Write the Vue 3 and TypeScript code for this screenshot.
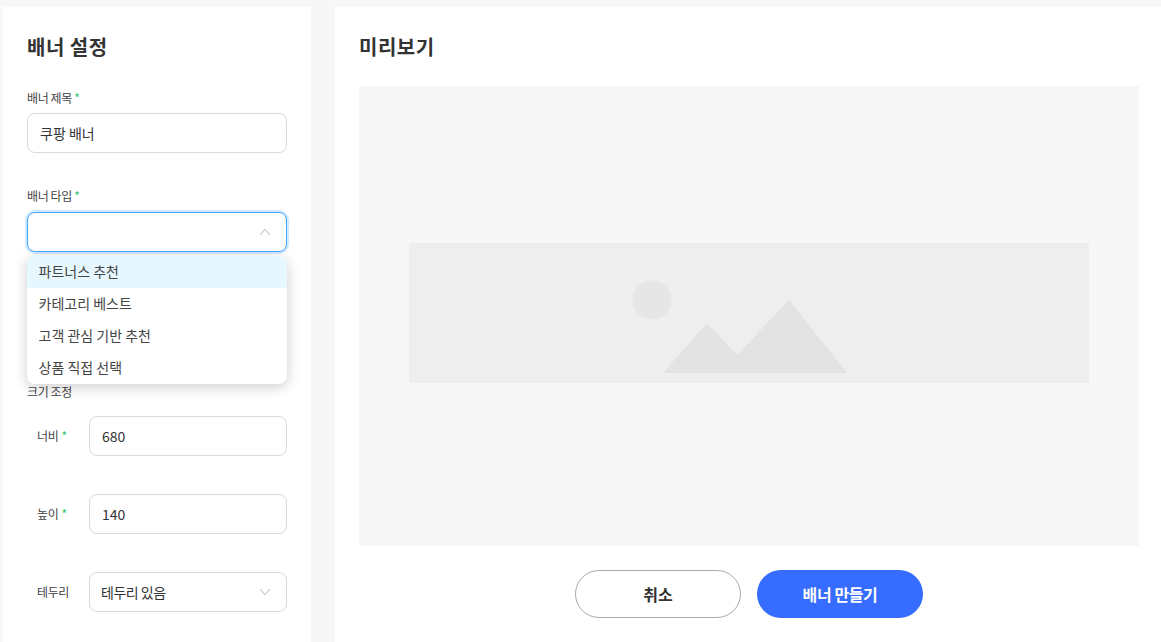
<script setup lang="ts">
import { ref } from "vue";

const title = ref('쿠팡 배너')
const width = ref('680')
const height = ref('140')
const bannerTypes = ['파트너스 추천', '카테고리 베스트', '고객 관심 기반 추천', '상품 직접 선택']
</script>

<template>
  <div class="page">
    <section class="card settings">
      <h2>배너 설정</h2>

      <div class="field">
        <label>배너 제목 <i>*</i></label>
        <input v-model="title" class="input" />
      </div>

      <div class="field type-field">
        <label>배너 타입 <i>*</i></label>
        <div class="select open">
          <svg class="arrow" width="12" height="8" viewBox="0 0 12 8"><path d="M1 7 L6 1.5 L11 7" /></svg>
        </div>
        <ul class="menu">
          <li v-for="(item, i) in bannerTypes" :key="item" :class="{ active: i === 0 }">{{ item }}</li>
        </ul>
      </div>

      <div class="size-title">크기 조정</div>
      <div class="size-row">
        <label>너비 <i>*</i></label>
        <input v-model="width" class="input" />
      </div>
      <div class="size-row">
        <label>높이 <i>*</i></label>
        <input v-model="height" class="input" />
      </div>
      <div class="size-row">
        <label>테두리</label>
        <div class="select">
          <span class="value">테두리 있음</span>
          <svg class="arrow" width="12" height="8" viewBox="0 0 12 8"><path d="M1 1 L6 6.5 L11 1" /></svg>
        </div>
      </div>
    </section>

    <section class="card preview">
      <h2>미리보기</h2>
      <div class="stage">
        <div class="placeholder">
          <svg width="680" height="140" viewBox="0 0 680 140">
            <circle cx="243" cy="57" r="19.5" fill="#e6e6e6" />
            <path d="M254 130 L298 80 L328 112 L380 57 L438 130 Z" fill="#e3e3e3" />
          </svg>
        </div>
      </div>
      <div class="actions">
        <button class="btn cancel">취소</button>
        <button class="btn primary">배너 만들기</button>
      </div>
    </section>
  </div>
</template>

<style>
html, body {
  margin: 0;
  background: #f7f7f7;
  overflow: hidden;
}
</style>

<style scoped>
.page {
  display: flex;
  align-items: stretch;
  gap: 24px;
  height: 635px;
  padding: 7px 0 0 3px;
  overflow: hidden;
  color: #333;
  font-family: "Noto Sans CJK KR", "Noto Sans", sans-serif;
}

.card {
  background: #fff;
  box-sizing: border-box;
  height: 700px;
}

.settings {
  width: 308px;
  flex: none;
  padding: 26px 24px 0;
}

.preview {
  flex: 1;
  padding: 26px 22px 0 24px;
}

h2 {
  margin: 0;
  font-size: 20px;
  line-height: 28px;
  font-weight: 700;
  color: #333;
  letter-spacing: 0.5px;
}

/* 입력 필드 */
.field {
  position: relative;
  margin-top: 28px;
}

.type-field {
  margin-top: 34px;
}

label {
  display: block;
  font-size: 12px;
  line-height: 18px;
  color: #444;
  letter-spacing: -0.4px;
}

label i {
  font-style: normal;
  color: #2fbf71;
}

.size-row label i {
  margin-left: 1px;
}

.input,
.select {
  display: flex;
  align-items: center;
  box-sizing: border-box;
  width: 100%;
  height: 40px;
  padding: 0 12px;
  border: 1px solid #d9d9d9;
  border-radius: 8px;
  background: #fff;
  font: inherit;
  font-size: 14px;
  color: #333;
  outline: none;
}

.field .input {
  margin-top: 6px;
}

.field .select {
  margin-top: 7px;
}

.select.open {
  border-color: #40a9ff;
  box-shadow: 0 0 0 2px rgba(24, 144, 255, 0.2);
}

.value {
  margin-left: -1px;
  letter-spacing: -0.5px;
}

.arrow {
  margin-left: auto;
  margin-right: 3px;
  fill: none;
  stroke: #c4c4c4;
  stroke-width: 1.1;
}

.menu {
  position: absolute;
  top: 69px;
  left: 0;
  z-index: 5;
  width: 100%;
  margin: 0;
  padding: 0;
  list-style: none;
  background: #fff;
  border-radius: 8px;
  overflow: hidden;
  box-shadow: 0 3px 14px rgba(0, 0, 0, 0.2);
}

.menu li {
  height: 32px;
  line-height: 31.5px;
  padding: 0 11.5px;
  font-size: 14px;
  color: #444;
}

.menu li.active {
  background: #e6f7ff;
}

/* 크기 조정 */
.size-title {
  margin-top: 131px;
  font-size: 12px;
  line-height: 18px;
  color: #444;
  letter-spacing: -0.4px;
}

.size-row {
  display: flex;
  align-items: center;
  margin-top: 38px;
  padding-left: 10px;
}

.size-title + .size-row {
  margin-top: 15px;
}

.size-row label {
  width: 52px;
  flex: none;
}

.size-row .input,
.size-row .select {
  width: 198px;
}

/* 미리보기 */
.stage {
  display: flex;
  align-items: center;
  justify-content: center;
  box-sizing: border-box;
  height: 460px;
  margin-top: 25px;
  padding-bottom: 6px;
  background: #f7f7f7;
}

.placeholder {
  width: 680px;
  height: 140px;
  background: #eee;
}

.placeholder svg {
  display: block;
}

.actions {
  display: flex;
  justify-content: center;
  gap: 16px;
  margin-top: 24px;
}

.btn {
  width: 166px;
  height: 48px;
  border-radius: 24px;
  font: inherit;
  font-size: 16px;
  font-weight: 700;
  cursor: pointer;
}

.cancel {
  background: #fff;
  border: 1px solid #aaa;
  color: #333;
}

.primary {
  background: #366cff;
  border: none;
  color: #fff;
  letter-spacing: -0.4px;
}
</style>
